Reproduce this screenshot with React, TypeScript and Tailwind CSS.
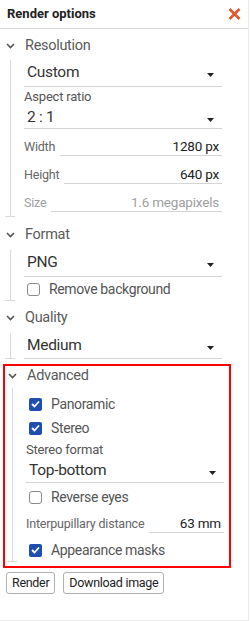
import React from "react";

const F = { fontFamily: 'Roboto, "Noto Sans", sans-serif' };

function Chevron() {
  return (
    <svg width="9" height="6" viewBox="0 0 9 6" className="ml-[1px]">
      <path d="M1 1 L4.5 4.5 L8 1" fill="none" stroke="#555" strokeWidth="1.6" />
    </svg>
  );
}

function Caret() {
  return (
    <svg width="7" height="4" viewBox="0 0 7 4" className="mr-[8px] mt-[4px]">
      <path d="M0 0 H7 L3.5 4 Z" fill="#222" />
    </svg>
  );
}

function Check({ checked }: { checked?: boolean }) {
  if (checked)
    return (
      <div className="w-[13px] h-[13px] rounded-[2px] bg-[#1f4fae] flex items-center justify-center shrink-0">
        <svg width="9" height="8" viewBox="0 0 9 8">
          <path d="M1 4 L3.5 6.5 L8 1.5" fill="none" stroke="#fff" strokeWidth="1.8" />
        </svg>
      </div>
    );
  return <div className="w-[13px] h-[13px] rounded-[3px] border border-[#8a8a8a] bg-white shrink-0" />;
}

function SectionHeader({ title, h }: { title: string; h: string }) {
  return (
    <div className={`${h} flex items-center`}>
      <Chevron />
      <span className="ml-[10px] text-[14.5px] tracking-[-0.3px] text-[#5a5a5a]">{title}</span>
    </div>
  );
}

function Body({ children }: { children: React.ReactNode }) {
  return (
    <div className="flex">
      <div className="w-[10px] flex flex-col">
        <div className="flex-1 w-[6px] border-r border-[#d9d9d9]" />
        <div className="h-px w-[10px] bg-[#d9d9d9]" />
      </div>
      <div className="ml-[9px] w-[198px] flex flex-col">{children}</div>
    </div>
  );
}

function Dropdown({ value, h }: { value: string; h: string }) {
  return (
    <div className={`${h} flex items-center justify-between border-b border-[#d4d4d4]`}>
      <span className="pl-[3px] text-[15.5px] tracking-[-0.3px] text-[#333]">{value}</span>
      <Caret />
    </div>
  );
}

function Field({ label, value, muted }: { label: string; value: string; muted?: boolean }) {
  return (
    <div className="h-[28px] flex items-center">
      <span className={`text-[12.5px] tracking-[-0.2px] mr-[5px] ${muted ? "text-[#a0a0a0]" : "text-[#666]"}`}>{label}</span>
      <div className="flex-1 h-[18px] border-b border-[#d4d4d4] flex items-center justify-end">
        <span className={`text-[13.5px] tracking-[-0.2px] pr-[3px] ${muted ? "text-[#a0a0a0]" : "text-[#222]"}`}>{value}</span>
      </div>
    </div>
  );
}

function CheckRow({ label, checked }: { label: string; checked?: boolean }) {
  return (
    <div className="h-[24px] flex items-center pl-[3px]">
      <Check checked={checked} />
      <span className="ml-[9px] text-[14px] tracking-[-0.35px] text-[#555]">{label}</span>
    </div>
  );
}

export default function App() {
  return (
    <div style={F} className="w-[249px] h-[621px] bg-white border-r border-b border-[#ececec] flex flex-col">
      <div className="h-[29px] border-b border-[#dcdcdc] flex items-center justify-between pl-[7px] pr-[7px] shrink-0">
        <span className="text-[13px] font-bold text-[#222]">Render options</span>
        <svg width="13" height="12" viewBox="0 0 13 12">
          <path d="M1.5 1 L11.5 11 M11.5 1 L1.5 11" stroke="#e4562c" strokeWidth="2.6" />
        </svg>
      </div>
      <div className="pl-[5px] pt-[5px] flex flex-col">
        <SectionHeader title="Resolution" h="h-[24px]" />
        <div className="h-[2px]" />
        <Body>
          <Dropdown value="Custom" h="h-[27px]" />
          <div className="h-[20px] flex items-center text-[13px] tracking-[-0.2px] text-[#555]">Aspect ratio</div>
          <Dropdown value="2 : 1" h="h-[22px]" />
          <div className="h-[4px]" />
          <Field label="Width" value="1280 px" />
          <Field label="Height" value="640 px" />
          <Field label="Size" value="1.6 megapixels" muted />
        </Body>
        <div className="h-[6px]" />
        <SectionHeader title="Format" h="h-[24px]" />
        <div className="h-[3px]" />
        <Body>
          <Dropdown value="PNG" h="h-[27px]" />
          <CheckRow label="Remove background" />
        </Body>
        <div className="h-[5px]" />
        <SectionHeader title="Quality" h="h-[24px]" />
        <div className="h-[3px]" />
        <Body>
          <Dropdown value="Medium" h="h-[26px]" />
        </Body>
        <div className="h-[5px]" />
        <div className="-ml-[2px] w-[228px] border-2 border-[#ff0000] flex flex-col">
          <div className="pl-[2px]">
            <SectionHeader title="Advanced" h="h-[20px]" />
          </div>
          <div className="h-[2px]" />
          <div className="pl-[2px]">
            <Body>
              <div className="h-[4px]" />
              <CheckRow label="Panoramic" checked />
              <CheckRow label="Stereo" checked />
              <div className="h-[20px] flex items-center text-[13px] tracking-[-0.2px] text-[#555]">Stereo format</div>
              <Dropdown value="Top-bottom" h="h-[23px]" />
              <div className="h-[2px]" />
              <CheckRow label="Reverse eyes" />
              <div className="h-[1px]" />
              <Field label="Interpupillary distance" value="63 mm" />
              <CheckRow label="Appearance masks" checked />
            </Body>
          </div>
          <div className="h-[4px]" />
        </div>
        <div className="flex gap-[8px] mt-[4px] ml-[1px]">
          <button className="h-[22px] px-[5px] border border-[#b0b0b0] rounded-[3px] text-[12.5px] tracking-[-0.3px] text-[#222] bg-white">Render</button>
          <button className="h-[22px] px-[5px] border border-[#b0b0b0] rounded-[3px] text-[12.5px] tracking-[-0.3px] text-[#222] bg-white">Download image</button>
        </div>
      </div>
    </div>
  );
}
